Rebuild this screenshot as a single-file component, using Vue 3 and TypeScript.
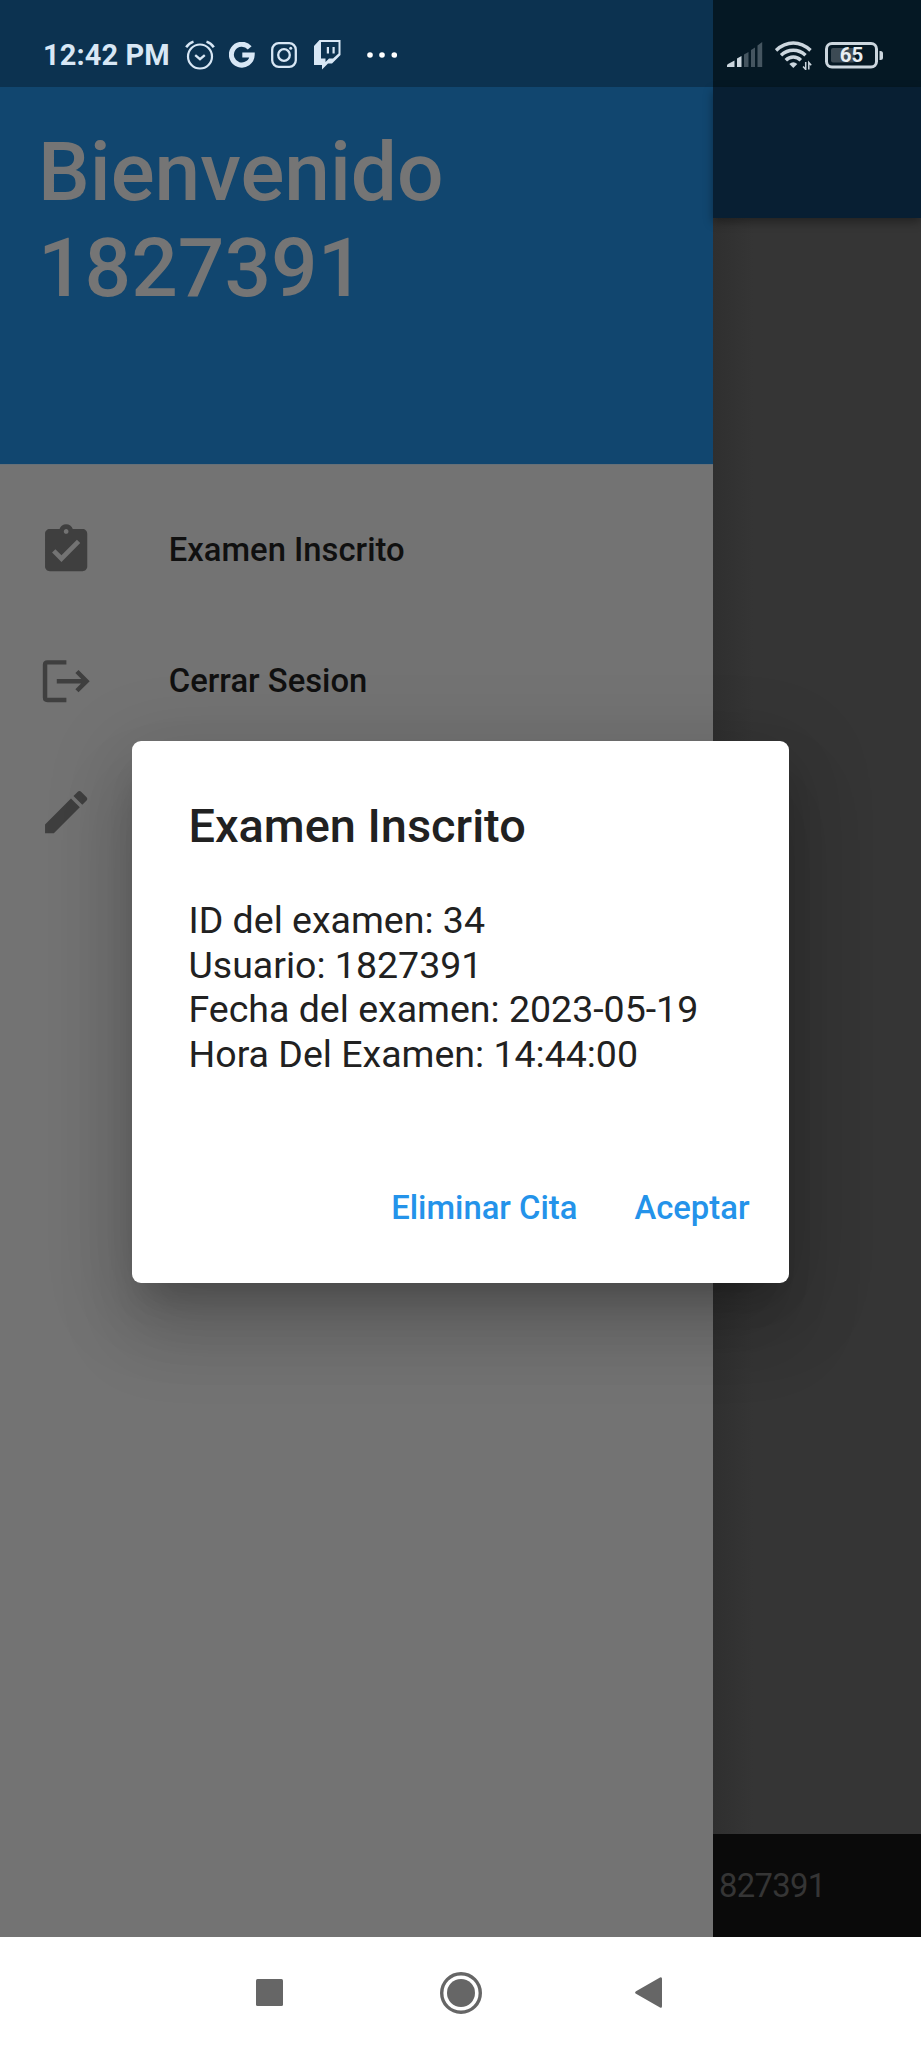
<script setup lang="ts">
interface DrawerItem {
  label: string
  icon: 'task' | 'logout' | 'edit'
}

const user = '1827391'

const items: DrawerItem[] = [
  { label: 'Examen Inscrito', icon: 'task' },
  { label: 'Cerrar Sesion', icon: 'logout' },
  { label: '', icon: 'edit' },
]

const details: string[] = [
  'ID del examen: 34',
  `Usuario: ${user}`,
  'Fecha del examen: 2023-05-19',
  'Hora Del Examen: 14:44:00',
]
</script>

<template>
  <div class="phone">
    <div class="screen">
      <aside class="drawer">
        <div class="drawer-status"></div>
        <header class="drawer-header">
          <h1>Bienvenido<br />{{ user }}</h1>
        </header>
        <ul class="menu">
          <li v-for="item in items" :key="item.icon">
            <svg class="menu-icon" viewBox="0 0 24 24">
              <path
                v-if="item.icon === 'task'"
                fill="currentColor"
                d="M19 3h-4.180C14.400 1.840 13.300 1 12 1s-2.400.84-2.820 2H5c-1.100 0-2 .9-2 2v14c0 1.100.9 2 2 2h14c1.100 0 2-.9 2-2V5c0-1.100-.9-2-2-2zm-7 0c.55 0 1 .45 1 1s-.45 1-1 1-1-.45-1-1 .45-1 1-1zm-2 14l-4-4 1.410-1.410L10 14.170l6.590-6.590L18 9l-8 8z"
              />
              <g v-else-if="item.icon === 'logout'" fill="none" stroke="currentColor" stroke-width="1.9">
                <path d="M12.100 4H4Q3 4 3 5v14q0 1 1 1h8.100" />
                <path d="M8 12h12.500M16.600 7.900l4.100 4.100-4.100 4.100" />
              </g>
              <path
                v-else
                fill="currentColor"
                d="M3 17.250V21h3.750L17.810 9.940l-3.750-3.750L3 17.250zM20.710 7.040c.39-.39.39-1.020 0-1.410l-2.340-2.340c-.39-.39-1.020-.39-1.410 0l-1.830 1.830 3.750 3.750 1.830-1.830z"
              />
            </svg>
            <span>{{ item.label }}</span>
          </li>
        </ul>
      </aside>
      <main class="page">
        <div class="page-status"></div>
        <div class="app-bar"></div>
        <div class="page-body"></div>
        <footer class="page-footer">827391</footer>
      </main>

      <div class="status-bar">
        <span class="clock">12:42 PM</span>
        <svg class="alarm" width="30" height="30" viewBox="0 0 30 30" fill="none" stroke="currentColor" stroke-width="2.200">
          <circle cx="15" cy="16.500" r="12" />
          <path d="M10.200 15.200l4.800 4 4.800-4" stroke-width="2.400" />
          <path d="M1.200 7.300Q4 3 8.500 1.600M28.800 7.300Q26 3 21.500 1.600" stroke-width="2.500" />
        </svg>
        <svg class="google" width="26" height="26" viewBox="0 0 26 26" fill="none" stroke="currentColor" stroke-width="5">
          <path d="M20.700 5.900A10.400 10.400 0 1 0 23.200 13H13.300" />
        </svg>
        <svg class="insta" width="26" height="26" viewBox="0 0 26 26" fill="none" stroke="currentColor" stroke-width="2.300">
          <rect x="1.200" y="1.200" width="23.600" height="23.600" rx="6.500" />
          <circle cx="13" cy="13" r="5.800" />
          <circle cx="19.700" cy="6.200" r="1.500" fill="currentColor" stroke="none" />
        </svg>
        <svg class="twitch" width="27" height="30" viewBox="0 0 27 30" fill="currentColor">
          <path fill-rule="evenodd" d="M5.500 0H26.500V15L18 23.500H14L8 29.500V25H0V6zM7 2V18.500H11.500V22L15 18.500H19L24.500 13.500V2z" />
          <path d="M12.800 7h2.200v6.500h-2.200zM18.500 7h2.200v6.500h-2.200z" />
        </svg>
        <svg class="dots" width="30" height="6" viewBox="0 0 30 6" fill="#fff">
          <circle cx="3" cy="3" r="2.800" /><circle cx="15" cy="3" r="2.800" /><circle cx="27.300" cy="3" r="2.800" />
        </svg>
        <span class="spacer"></span>
        <svg class="signal" width="36" height="26" viewBox="0 0 36 26" fill="currentColor">
          <path d="M0 25v-1.500q0-1 1-1.500l6.500-3.500V25zM10 25V16.500l4.500-2.500v11z" />
          <path fill="#455560" d="M17 25V12.500l4.500-2.500v15zM24 25V8l4-2.500V25zM30.500 25V3.500L35.200 0v25z" />
        </svg>
        <svg class="wifi" width="37" height="29" viewBox="0 0 37 29" fill="none" stroke="currentColor" stroke-width="3.500">
          <path d="M1 9.400Q9 2 18.300 2T35.500 9.400M6 14.200Q11.500 9.200 18.300 9.200T30.500 14.200M10.800 19.200Q14 16 18.300 16T25.800 19.200" />
          <path d="M18.300 27l-4-4q4-3.600 8 0z" fill="currentColor" stroke="none" />
          <path d="M30.700 21v7.500l-2.600-3M33.800 28.500V21.500l2.400 2.700" stroke-width="1.500" />
        </svg>
        <svg class="battery" width="58" height="27" viewBox="0 0 58 27">
          <rect x="1.500" y="1.500" width="50" height="23.500" rx="5.500" fill="none" stroke="currentColor" stroke-width="3" />
          <rect x="6" y="6" width="24" height="14.500" rx="2" fill="#3c4a54" />
          <path d="M54.500 9h1q2.500 0 2.500 2.500v4q0 2.500-2.500 2.500h-1z" fill="currentColor" />
          <text x="26.500" y="20.300" text-anchor="middle" class="charge">65</text>
        </svg>
      </div>

      <div class="modal">
        <section class="dialog">
          <h2>Examen Inscrito</h2>
          <p class="details">
            <span v-for="line in details" :key="line">{{ line }}</span>
          </p>
          <div class="actions">
            <button type="button">Eliminar Cita</button>
            <button type="button">Aceptar</button>
          </div>
        </section>
      </div>
    </div>

    <nav class="nav-bar">
      <svg width="27" height="27" viewBox="0 0 27 27"><rect width="27" height="27" rx="1.500" /></svg>
      <svg class="home" width="42" height="42" viewBox="0 0 42 42">
        <circle cx="21" cy="21" r="19.300" fill="none" stroke="#666" stroke-width="3.400" />
        <circle cx="21" cy="21" r="14" />
      </svg>
      <svg width="27" height="31" viewBox="0 0 27 31"><path d="M1 14.200L25 .5q2-.8 2 1.300v27.400q0 2.100-2 1.300L1 16.800q-1.800-1.300 0-2.600z" /></svg>
    </nav>
  </div>
</template>

<style>
html,
body {
  margin: 0;
  background: #fff;
}
</style>

<style scoped>
.phone {
  width: 921px;
  height: 2048px;
  display: flex;
  flex-direction: column;
  overflow: hidden;
  font-family: Roboto, 'Liberation Sans', sans-serif;
}
.screen {
  position: relative;
  display: flex;
  height: 1937px;
  overflow: hidden;
}
.drawer {
  width: 713px;
  background: #737373;
}
.drawer-status {
  height: 87px;
  background: #0c3250;
}
.drawer-header {
  box-sizing: border-box;
  height: 378px;
  padding: 36.500px 38px;
  background: #11466f;
  border-bottom: 1px solid #667078;
}
h1 {
  margin: 0;
  color: #757575;
  font-size: 82px;
  line-height: 96px;
  font-weight: 500;
}
.menu {
  list-style: none;
  margin: 0;
  padding: 19px 37.500px;
}
.menu li {
  display: flex;
  align-items: center;
  gap: 75px;
  height: 131.300px;
  color: #101010;
  font-size: 32.800px;
  font-weight: 500;
}
.menu-icon {
  width: 56.300px;
  height: 56.300px;
  color: #3f3f3f;
}
.menu span {
  padding-top: 1px;
}
.page {
  flex: 1;
  display: flex;
  flex-direction: column;
  background: linear-gradient(90deg, #2f2f2f, #353535 40px);
}
.page-status {
  height: 87px;
  background: #051824;
}
.app-bar {
  height: 131px;
  background: #081f33;
  box-shadow: 0 4px 9px rgba(0, 0, 0, 0.35);
}
.page-body {
  flex: 1;
}
.page-footer {
  box-sizing: border-box;
  height: 103px;
  padding-left: 6px;
  background: #0a0a0a;
  color: #353535;
  font-size: 32.800px;
  line-height: 104px;
  letter-spacing: -0.700px;
}
.status-bar {
  position: absolute;
  inset: 0 0 auto 0;
  box-sizing: border-box;
  height: 87px;
  padding: 23px 38px 0 43px;
  display: flex;
  align-items: center;
  color: #d8e7f5;
}
.clock {
  font-size: 29px;
  font-weight: 700;
  letter-spacing: 0.100px;
  white-space: nowrap;
  width: 127px;
}
.alarm {
  margin-left: 15px;
}
.google {
  margin-left: 14px;
}
.insta {
  margin-left: 16px;
}
.twitch {
  margin-left: 17px;
}
.dots {
  margin-left: 26px;
}
.spacer {
  flex: 1;
}
.signal,
.wifi,
.battery {
  color: #ccd6de;
}
.wifi {
  margin-left: 12px;
}
.battery {
  margin-left: 13px;
}
.charge {
  fill: #e8eef2;
  font-size: 20.500px;
  font-weight: 700;
}
.modal {
  position: absolute;
  inset: 87px 0 0 0;
  display: flex;
  align-items: center;
  justify-content: center;
}
.dialog {
  box-sizing: border-box;
  width: 657px;
  height: 542px;
  padding: 56px 20.500px 0 56.500px;
  display: flex;
  flex-direction: column;
  border-radius: 9px;
  background: #fff;
  color: #212121;
  box-shadow:
    0 26px 35px -16px rgba(0, 0, 0, 0.2),
    0 50px 72px 5px rgba(0, 0, 0, 0.13),
    0 18px 80px 14px rgba(0, 0, 0, 0.12);
}
h2 {
  margin: 0;
  font-size: 46.900px;
  line-height: 58px;
  font-weight: 500;
}
.details {
  display: flex;
  flex-direction: column;
  margin: 43px 0 0;
  font-size: 37.500px;
  line-height: 44.700px;
}
.actions {
  display: flex;
  justify-content: flex-end;
  gap: 19px;
  margin-top: 89px;
}
button {
  border: 0;
  padding: 0 19px;
  height: 84px;
  background: none;
  color: #2493ea;
  font: 500 32.800px/84px Roboto, 'Liberation Sans', sans-serif;
}
.nav-bar {
  display: flex;
  align-items: center;
  justify-content: space-between;
  height: 111px;
  padding: 0 259px 0 256px;
  background: #fff;
  fill: #666;
}
.home {
  margin-left: 4px;
}
</style>
